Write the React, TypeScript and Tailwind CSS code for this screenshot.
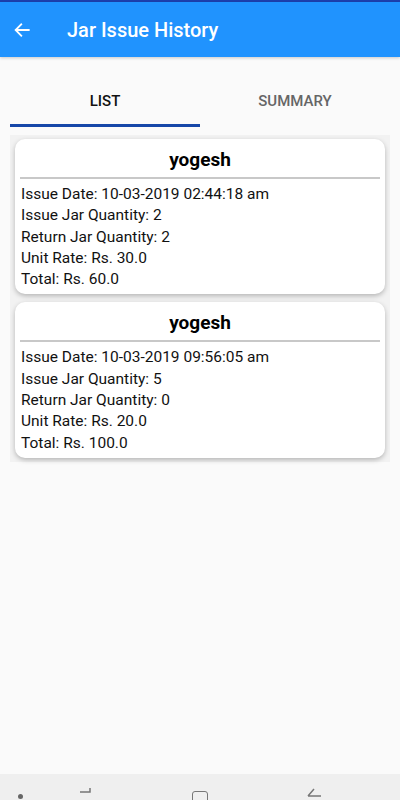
import React from 'react';

const entries = [
  { name: 'yogesh', date: '10-03-2019 02:44:18 am', issue: 2, ret: 2, rate: '30.0', total: '60.0' },
  { name: 'yogesh', date: '10-03-2019 09:56:05 am', issue: 5, ret: 0, rate: '20.0', total: '100.0' },
];

function IssueCard({ e }: { e: (typeof entries)[number] }) {
  return (
    <div className="bg-white rounded-[10px] shadow-[0_2px_5px_rgba(0,0,0,0.25)] px-[5px] pt-[7px] pb-[4px]">
      <h2 className="text-center text-[19px] font-bold text-black leading-[28px]">{e.name}</h2>
      <div className="h-[2px] bg-[#c8c8c8] mt-[3px] mb-[5px]" />
      <div className="text-[15.5px] leading-[21.3px] text-[#111] pl-[1px]">
        <p>Issue Date: {e.date}</p>
        <p>Issue Jar Quantity: {e.issue}</p>
        <p>Return Jar Quantity: {e.ret}</p>
        <p>Unit Rate: Rs. {e.rate}</p>
        <p>Total: Rs. {e.total}</p>
      </div>
    </div>
  );
}

export default function App() {
  return (
    <div className="w-[400px] h-[800px] bg-[#fafafa] flex flex-col overflow-hidden" style={{ fontFamily: 'Roboto, "Noto Sans", sans-serif' }}>
      <div className="h-[2px] bg-[#1c3fae]" />
      <header className="h-[55px] bg-[#2093fe] flex items-center shadow-[0_1px_3px_rgba(0,0,0,0.2)]">
        <svg className="ml-[13px]" width="18" height="18" viewBox="0 0 24 24" fill="none" stroke="white" strokeWidth="2.4" strokeLinecap="square">
          <path d="M21 12H4M11 4.5L3.5 12 11 19.5" />
        </svg>
        <h1 className="ml-[36px] text-white text-[20px] font-medium">Jar Issue History</h1>
      </header>

      <div className="mx-[10px] mt-[21px] flex">
        <div className="flex-1 flex flex-col items-center">
          <span className="text-[15px] font-medium text-[#111] leading-[46px]">LIST</span>
          <div className="h-[3px] w-full bg-[#1747a8]" />
        </div>
        <div className="flex-1 flex flex-col items-center">
          <span className="text-[15px] font-medium text-[#666] leading-[46px]">SUMMARY</span>
        </div>
      </div>

      <div className="mx-[10px] mt-[8px] bg-[#f2f2f2] px-[5px] pt-[4px] pb-[4px] flex flex-col gap-[8px]">
        {entries.map((e, i) => (
          <IssueCard key={i} e={e} />
        ))}
      </div>

      <div className="flex-1" />
      <nav className="h-[26px] bg-[#efefef] relative">
        <span className="absolute left-[18px] top-[20px] w-[5px] h-[5px] rounded-full bg-[#666]" />
        <svg className="absolute left-[78px] top-[13px]" width="16" height="13" viewBox="0 0 16 13" fill="none" stroke="#777" strokeWidth="1.5">
          <path d="M12 1v4H2" />
        </svg>
        <span className="absolute left-[192px] top-[17px] w-[16px] h-[16px] border-[1.5px] border-[#777] rounded-[3px]" />
        <svg className="absolute left-[306px] top-[14px]" width="16" height="12" viewBox="0 0 16 12" fill="none" stroke="#777" strokeWidth="1.5">
          <path d="M8 1L2 8M2 8h13" />
        </svg>
      </nav>
    </div>
  );
}
